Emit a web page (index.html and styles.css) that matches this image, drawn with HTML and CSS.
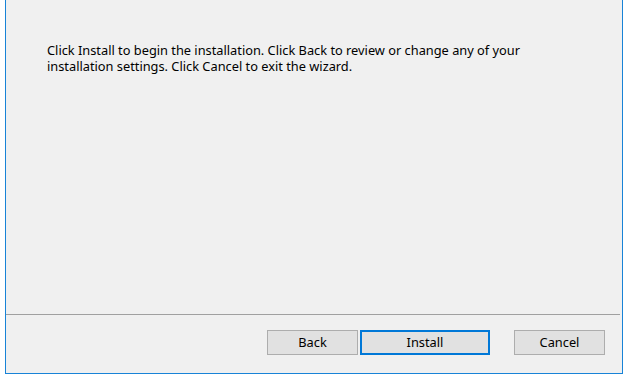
FILE: index.html
```html
<!DOCTYPE html>
<html lang="en">
<head>
    <meta charset="UTF-8">
    <title>Ready to Install</title>
    <link rel="stylesheet" href="styles.css">
</head>
<body>
    <div class="window">
        <div class="content">
            <p>Click Install to begin the installation. Click Back to review or change any of your
                installation settings. Click Cancel to exit the wizard.</p>
        </div>
        <div class="divider"></div>
        <div class="buttons">
            <button class="btn btn-back">Back</button>
            <button class="btn btn-default">Install</button>
            <button class="btn btn-cancel">Cancel</button>
        </div>
    </div>
</body>
</html>
```

FILE: styles.css
```css
body {
    margin: 0;
    background-color: #ffffff;
    font-family: 'Noto Sans', sans-serif;
    font-size: 12.8px;
    color: #000000;
}

.window {
    margin-left: 5px;
    width: 616px;
    height: 373px;
    background-color: #f0f0f0;
    border: 1px solid #1883d7;
    border-top: none;
    display: flex;
    flex-direction: column;
}

.content {
    height: 314px;
    padding: 42px 40px 0 41px;
    box-sizing: border-box;
}

.content p {
    margin: 0;
    width: 485px;
    line-height: 16px;
}

.divider {
    height: 1px;
    margin-right: 2px;
    background-color: #a0a0a0;
}

.buttons {
    display: flex;
    justify-content: flex-end;
    padding: 15px 17px 0 0;
}

.btn {
    height: 25px;
    width: 91px;
    padding: 0 0 2px 0;
    background-color: #e1e1e1;
    border: 1px solid #adadad;
    font-family: 'Noto Sans', sans-serif;
    font-size: 12.8px;
    color: #000000;
}

.btn-default {
    width: 130px;
    margin-left: 2px;
    border: 2px solid #0078d7;
}

.btn-cancel {
    margin-left: 24px;
}
```
